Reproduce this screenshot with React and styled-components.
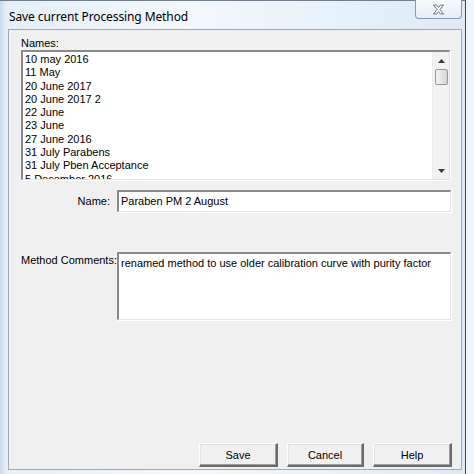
import React from 'react';
import styled, { createGlobalStyle } from 'styled-components';

const GlobalStyle = createGlobalStyle`
  html, body {
    margin: 0;
    padding: 0;
    background: #eef5fb;
  }
  #root {
    width: 474px;
    height: 474px;
    overflow: hidden;
  }
`;

const Frame = styled.div`
  width: 466px;
  height: 474px;
  box-sizing: border-box;
  display: flex;
  flex-direction: column;
  padding: 0 3px 4px 8px;
  border-top: 1px solid #6f7f8f;
  border-right: 1px solid #3c4650;
  background: linear-gradient(90deg, #c9dcee 0px, #e4eff9 6px, #f3f8fc 40%, #e8f2fa 70%, #dde9f4 100%);
`;

const TitleBar = styled.div`
  height: 28px;
  display: flex;
  align-items: flex-start;
  justify-content: space-between;
`;

const Title = styled.div`
  font-family: "Segoe UI", "Noto Sans", sans-serif;
  font-size: 12px;
  color: #000;
  margin-top: 7px;
  margin-left: 1px;
  letter-spacing: -0.1px;
`;

const CloseButton = styled.div`
  width: 47px;
  height: 19px;
  margin-top: -1px;
  margin-right: 0;
  box-sizing: border-box;
  border: 1px solid #8c9aab;
  border-top: none;
  border-radius: 0 0 4px 4px;
  background: linear-gradient(#f7fbfe, #e4eef7);
  display: flex;
  align-items: center;
  justify-content: center;
`;

const Client = styled.div`
  flex: 1;
  background: #f0f0f0;
  border: 1px solid #a4a9ae;
  display: flex;
  flex-direction: column;
  padding: 7px 11px 2px 12px;
  font-family: "Liberation Sans", Arial, sans-serif;
  font-size: 11px;
  color: #000;
`;

const Label = styled.div`
  line-height: 13px;
  height: 13px;
`;

const Sunken = styled.div`
  box-sizing: border-box;
  background: #fff;
  border-top: 2px solid #8a8a8a;
  border-left: 2px solid #8a8a8a;
  border-right: 1px solid #e3e3e3;
  border-bottom: 1px solid #e3e3e3;
  box-shadow: 1px 1px 0 #fff;
`;

const ListBox = styled(Sunken)`
  height: 130px;
  display: flex;
  overflow: hidden;
`;

const Items = styled.div`
  flex: 1;
  padding: 1px 0 0 2px;
  overflow: hidden;
`;

const Item = styled.div`
  line-height: 13.3px;
  height: 13.3px;
  white-space: nowrap;
`;

const ScrollBar = styled.div`
  width: 16px;
  background: #f2f2f2;
  border-left: 1px solid #ececec;
  display: flex;
  flex-direction: column;
  align-items: center;
`;

const Arrow = styled.div`
  height: 17px;
  width: 100%;
  display: flex;
  align-items: center;
  justify-content: center;
`;

const Thumb = styled.div`
  width: 13px;
  height: 16px;
  box-sizing: border-box;
  border: 1px solid #969696;
  border-radius: 2px;
  background: linear-gradient(90deg, #f4f4f4, #e3e3e3 60%, #d6d6d6);
`;

const Track = styled.div`
  flex: 1;
`;

const FormGrid = styled.div`
  display: grid;
  grid-template-columns: 96px 1fr;
  margin-top: 10px;
`;

const FieldLabel = styled.div`
  justify-self: ${p => (p.$end ? 'end' : 'start')};
  margin-right: ${p => (p.$end ? '7px' : '0')};
  margin-top: ${p => p.$top || 0}px;
  line-height: 13px;
`;

const TextBox = styled(Sunken)`
  height: 22px;
  padding: 3px 0 0 2px;
  line-height: 13px;
  margin-right: -1px;
`;

const CommentBox = styled(Sunken)`
  height: 68px;
  margin-top: 40px;
  padding: 3px 0 0 2px;
  line-height: 13px;
  margin-right: -1px;
`;

const Spacer = styled.div`
  flex: 1;
`;

const ButtonRow = styled.div`
  display: flex;
  justify-content: flex-end;
  gap: 9px;
  margin-right: -2px;
`;

const Button = styled.div`
  width: ${p => p.$w || 79}px;
  height: 24px;
  box-sizing: border-box;
  background: #f0f0f0;
  border-top: 1px solid #fff;
  border-left: 1px solid #fff;
  border-right: 2px solid #6b6b6b;
  border-bottom: 2px solid #6b6b6b;
  box-shadow: inset -1px -1px 0 #a0a0a0, inset 1px 1px 0 #e3e3e3;
  display: flex;
  align-items: center;
  justify-content: center;
  padding-top: 1px;
`;

const names = [
  '10 may 2016',
  '11 May',
  '20 June 2017',
  '20 June 2017 2',
  '22 June',
  '23 June',
  '27 June 2016',
  '31 July Parabens',
  '31 July Pben Acceptance',
  '5 December 2016',
];

const CloseGlyph = () => (
  <svg width="13" height="11" viewBox="0 0 13 11">
    <path
      d="M1.5 1 L4.5 1 L6.5 3.3 L8.5 1 L11.5 1 L8 5.5 L11.5 10 L8.5 10 L6.5 7.7 L4.5 10 L1.5 10 L5 5.5 Z"
      fill="#f4f6f8"
      stroke="#6c7480"
      strokeWidth="1"
      strokeLinejoin="round"
    />
  </svg>
);

const UpArrow = () => (
  <svg width="7" height="4" viewBox="0 0 7 4">
    <path d="M0 4 L3.5 0 L7 4 Z" fill="#3a3a3a" />
  </svg>
);

const DownArrow = () => (
  <svg width="7" height="4" viewBox="0 0 7 4">
    <path d="M0 0 L3.5 4 L7 0 Z" fill="#3a3a3a" />
  </svg>
);

const App = () => {
  return (
    <>
      <GlobalStyle />
      <Frame>
        <TitleBar>
          <Title>Save current Processing Method</Title>
          <CloseButton>
            <CloseGlyph />
          </CloseButton>
        </TitleBar>
        <Client>
          <Label>Names:</Label>
          <ListBox>
            <Items>
              {names.map(n => (
                <Item key={n}>{n}</Item>
              ))}
            </Items>
            <ScrollBar>
              <Arrow><UpArrow /></Arrow>
              <Thumb />
              <Track />
              <Arrow><DownArrow /></Arrow>
            </ScrollBar>
          </ListBox>
          <FormGrid>
            <FieldLabel $end $top={5}>Name:</FieldLabel>
            <TextBox>Paraben PM 2 August</TextBox>
            <FieldLabel $top={42}>Method Comments:</FieldLabel>
            <CommentBox>renamed method to use older calibration curve with purity factor</CommentBox>
          </FormGrid>
          <Spacer />
          <ButtonRow>
            <Button>Save</Button>
            <Button $w={77}>Cancel</Button>
            <Button>Help</Button>
          </ButtonRow>
        </Client>
      </Frame>
    </>
  );
};

export default App;
